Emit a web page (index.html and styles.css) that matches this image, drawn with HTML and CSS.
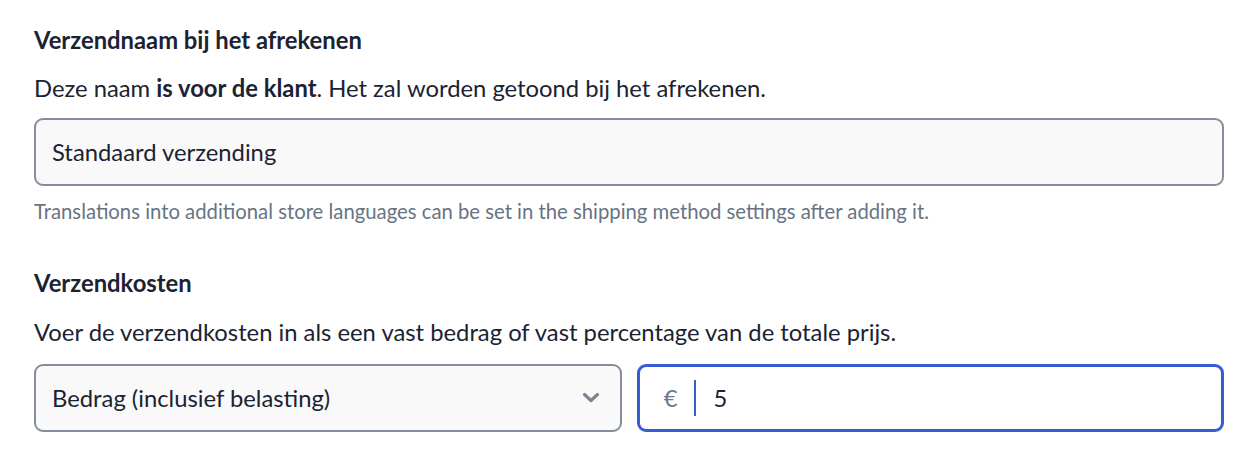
FILE: index.html
```html
<!DOCTYPE html>
<html lang="nl">
<head>
  <meta charset="utf-8">
  <title>Verzendmethode</title>
  <link rel="stylesheet" href="styles.css">
</head>
<body>
  <div class="form">
    <section class="field">
      <h3 class="label">Verzendnaam bij het afrekenen</h3>
      <p class="desc">Deze naam <strong>is voor de klant</strong>. Het zal worden getoond bij het afrekenen.</p>
      <div class="input">Standaard verzending</div>
      <p class="hint">Translations into additional store languages can be set in the shipping method settings after adding it.</p>
    </section>

    <section class="field costs">
      <h3 class="label">Verzendkosten</h3>
      <p class="desc">Voer de verzendkosten in als een vast bedrag of vast percentage van de totale prijs.</p>
      <div class="row">
        <div class="input select">
          <span>Bedrag (inclusief belasting)</span>
          <svg class="chevron" width="18" height="12" viewBox="0 0 18 12">
            <path d="M2.5 2.5 L9 8.5 L15.5 2.5" fill="none" stroke="#7b8591" stroke-width="3.2" stroke-linecap="round" stroke-linejoin="round"/>
          </svg>
        </div>
        <div class="amount">
          <span class="prefix">€</span>
          <span class="value">5</span>
        </div>
      </div>
    </section>
  </div>
</body>
</html>
```

FILE: styles.css
```css
* {
  box-sizing: border-box;
}

body {
  margin: 0;
  background: #fff;
  font-family: Lato, 'Noto Sans', sans-serif;
  color: #1b2333;
}

.form {
  padding: 24px 28px 0 34px;
}

.label {
  margin: 0;
  font-size: 23.8px;
  line-height: 32px;
  font-weight: 700;
}

.desc {
  margin: 16px 0 0;
  font-size: 23.8px;
  line-height: 32px;
}

.desc strong {
  font-weight: 700;
}

.input {
  margin-top: 14px;
  height: 68px;
  display: flex;
  align-items: center;
  padding: 0 16px;
  border: 2px solid #858f9b;
  border-radius: 9px;
  background: #f9f9f9;
  font-size: 23.8px;
}

.hint {
  margin: 12px 0 0;
  font-size: 20.3px;
  line-height: 26px;
  color: #687483;
}

.costs {
  margin-top: 43px;
}

.costs .desc {
  margin-top: 17px;
}

.row {
  margin-top: 16px;
  display: grid;
  grid-template-columns: 1fr 1fr;
  gap: 15px;
}

.row .input {
  margin-top: 0;
}

.select {
  justify-content: space-between;
  padding-right: 20px;
}

.amount {
  height: 68px;
  display: flex;
  align-items: center;
  border: 3px solid #3a5bd6;
  border-radius: 9px;
  background: #fff;
  font-size: 23.8px;
}

.prefix {
  width: 56px;
  height: 36px;
  display: flex;
  align-items: center;
  justify-content: flex-end;
  padding-right: 16px;
  border-right: 2px solid #3a5bd6;
  color: #6f7a88;
}

.value {
  padding-left: 18px;
}
```
